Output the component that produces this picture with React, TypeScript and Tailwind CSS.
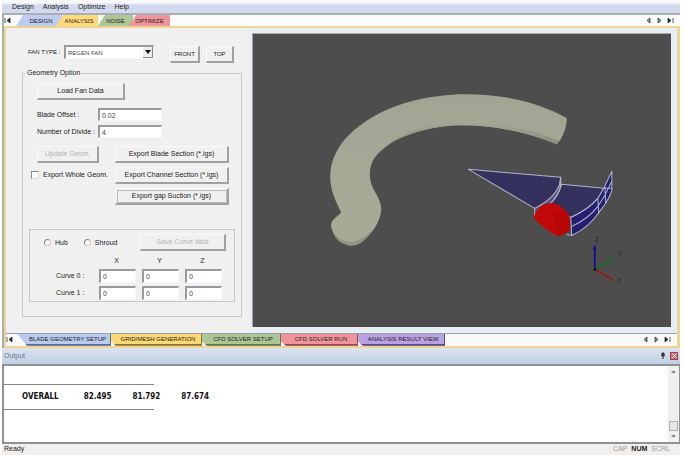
import React from "react";

const raised =
  "border-t border-l border-r-2 border-b-2 border-t-[#f8f8f8] border-l-[#f8f8f8] border-r-[#a0a0a0] border-b-[#a0a0a0] bg-[#f0f0f0] text-center whitespace-nowrap";
const sunken =
  "min-w-0 rounded-none border-t-2 border-l-2 border-r border-b border-t-[#9a9a9a] border-l-[#9a9a9a] border-r-[#f8f8f8] border-b-[#f8f8f8] bg-white px-0.5 text-[#444]";

function Push({ children, className = "", disabled = false }: { children: React.ReactNode; className?: string; disabled?: boolean }) {
  return (
    <button type="button" disabled={disabled} className={`${raised} h-[17px] disabled:text-[#b4b4b4] ${className}`}>
      {children}
    </button>
  );
}

function Arrow({ kind, label }: { kind: "first" | "prev" | "next" | "last"; label: string }) {
  const paths = {
    first: "M1 1v5M6 1L3 3.5L6 6Z",
    prev: "M5 1L2 3.5L5 6Z",
    next: "M2 1L5 3.5L2 6Z",
    last: "M6 1v5M1 1L4 3.5L1 6Z",
  };
  return (
    <button type="button" aria-label={label} className="flex h-2 w-[7px] items-center justify-center">
      <svg viewBox="0 0 7 7" className="size-[7px]">
        <path d={paths[kind]} stroke="#333" strokeWidth="0.8" fill={kind === "prev" || kind === "next" ? "#999" : "#222"} />
      </svg>
    </button>
  );
}

function Pager() {
  return (
    <div className="ml-auto flex items-center gap-1 pr-1.5">
      <Arrow kind="prev" label="Previous" />
      <Arrow kind="next" label="Next" />
      <Arrow kind="last" label="Last" />
    </div>
  );
}

const topTabs = [
  { name: "DESIGN", style: "w-[46px] bg-[#bccdf0] pl-1" },
  { name: "ANALYSIS", style: "-ml-1.5 w-[42px] bg-[#ffda7a] pl-1" },
  { name: "NOISE", style: "w-[35px] bg-[#adc696]" },
  { name: "OPTIMIZE", style: "-ml-1 w-[41px] bg-[#f0949c]" },
];

const bottomTabs = [
  { name: "BLADE GEOMETRY SETUP", style: "w-[94px] bg-[#b9cbef] border-[#5c6d96] pl-2 [clip-path:polygon(0_0,100%_0,100%_100%,10px_100%)]" },
  { name: "GRID/MESH GENERATION", style: "w-[91px] bg-[#fbd873] border-[#8a7430]" },
  { name: "CFD SOLVER SETUP", style: "w-[79px] bg-[#adc696] border-[#64784f]" },
  { name: "CFD SOLVER RUN", style: "w-[77px] bg-[#f0949c] border-[#8f4a52]" },
  { name: "ANALYSIS RESULT VIEW", style: "w-[87px] bg-[#b9a2e2] border-[#5d4a85]" },
];

function GeometryForm() {
  return (
    <form className="w-[244px] shrink-0 bg-[#f0f0f0] pt-[17px] pr-2 pb-3.5 pl-4 text-[7px] leading-2 text-[#222]">
      <div className="flex items-start">
        <label htmlFor="fan" className="mt-[3px] w-[42px] pl-1.5 text-[6px] whitespace-nowrap">FAN TYPE :</label>
        <div className="relative">
          <select id="fan" className={`${sunken} h-3.5 w-[90px] appearance-none text-[6px] leading-2`}>
            <option>REGEN FAN</option>
          </select>
          <span className="pointer-events-none absolute top-0.5 right-px flex h-[11px] w-2.5 items-center justify-center border-r border-b border-[#888] bg-[#ececec]">
            <svg viewBox="0 0 6 4" className="h-1 w-1.5"><path d="M0 0h6L3 4Z" fill="#111" /></svg>
          </span>
        </div>
        <Push className="mt-px ml-4 w-[30px] text-[6px]">FRONT</Push>
        <Push className="mt-px ml-1.5 w-7 text-[6px]">TOP</Push>
      </div>

      <fieldset className="mt-1.5 border border-[#c8c8c8] px-1.5 pb-3.5">
        <legend className="-ml-1 px-0.5">Geometry Option</legend>
        <div className="px-2 pt-1.5">
          <Push className="w-[88px]">Load Fan Data</Push>
          <div className="mt-2 grid grid-cols-[61px_64px] items-center gap-y-1">
            <label htmlFor="offset">Blade Offset :</label>
            <input id="offset" defaultValue="0.02" className={`${sunken} h-[13px]`} />
            <label htmlFor="divide" className="whitespace-nowrap">Number of Divide :</label>
            <input id="divide" defaultValue="4" className={`${sunken} h-[13px]`} />
          </div>
        </div>
        <div className="mt-2 flex justify-between pr-1.5">
          <div className="flex flex-col gap-2">
            <Push disabled className="ml-2 w-[62px]">Update Geom.</Push>
            <label className="ml-0.5 flex items-center gap-1 whitespace-nowrap">
              <input type="checkbox" className="size-2 appearance-none border border-t-[#888] border-r-[#ddd] border-b-[#ddd] border-l-[#888] bg-white" />
              Export Whole Geom.
            </label>
          </div>
          <div className="flex w-[114px] flex-col gap-1">
            <Push>Export Blade Section (*.igs)</Push>
            <Push>Export Channel Section (*.igs)</Push>
            <Push className="border-2 border-t-[#808080] border-r-[#606060] border-b-[#606060] border-l-[#808080] outline-1 -outline-offset-3 outline-[#bbb]">Export gap Suction (*.igs)</Push>
          </div>
        </div>

        <div className="mt-6 border border-[#c8c8c8] pt-1 pr-2">
          <div className="flex items-center">
            <label className="ml-3.5 flex items-center gap-1">
              <input type="radio" name="side" className="size-[7px] appearance-none rounded-full border border-t-[#888] border-r-[#ccc] border-b-[#ccc] border-l-[#888] bg-white" />
              Hub
            </label>
            <label className="ml-4 flex items-center gap-1">
              <input type="radio" name="side" className="size-[7px] appearance-none rounded-full border border-t-[#888] border-r-[#ccc] border-b-[#ccc] border-l-[#888] bg-white" />
              Shroud
            </label>
            <Push disabled className="ml-auto w-[86px]">Save Curve data</Push>
          </div>
          <table className="mt-1 mr-1 ml-auto border-collapse">
            <thead>
              <tr className="h-3">
                <td className="w-[37px]" />
                {["X", "Y", "Z"].map((axis) => (
                  <th key={axis} scope="col" className="w-[43px] p-0 pl-1 font-normal">{axis}</th>
                ))}
              </tr>
            </thead>
            <tbody>
              {["Curve 0", "Curve 1"].map((row) => (
                <tr key={row} className="h-[17px]">
                  <th scope="row" className="p-0 text-left font-normal whitespace-nowrap">{row} :</th>
                  {["X", "Y", "Z"].map((axis) => (
                    <td key={axis} className="p-0 text-right">
                      <input aria-label={`${row} ${axis}`} defaultValue="0" className={`${sunken} ml-auto block h-3.5 w-[37px]`} />
                    </td>
                  ))}
                </tr>
              ))}
            </tbody>
          </table>
        </div>
      </fieldset>
    </form>
  );
}

function Viewport() {
  return (
    <div className="flex min-w-0 flex-1 border-t border-l border-[#a8a8a8] bg-[#4d4d4d]">
      <svg viewBox="253 34 417 292" role="img" aria-label="Fan model" className="w-full font-['Liberation_Sans',sans-serif]">
        <defs>
          <linearGradient id="ringShade" x1="0" y1="0" x2="0" y2="1">
            <stop offset="0" stopColor="#a3a493" />
            <stop offset="1" stopColor="#a9aa98" />
          </linearGradient>
          <linearGradient id="edgeShade" x1="0" y1="0" x2="0" y2="1">
            <stop offset="0" stopColor="#a6a796" />
            <stop offset="1" stopColor="#858676" />
          </linearGradient>
        </defs>
        <path d="M566 118C540 103 505 94 465 94C430 94 395 103 372 117C345 133 330 153 330 177C330 190 336 202 341 212C336 217 330 220 331 226C333 238 344 245 351 245C360 245 366 238 371 232C377 225 381 215 381 208C380 197 372 190 370 180C368 165 373 156 385 147C402 133 435 125 462 125C495 125 530 133 556 144C562 138 566 127 566 118Z" fill="url(#ringShade)" />
        <path d="M381 150C400 131 434 121 462 121C495 121 530 129 558 140L556 144C530 133 495 125 462 125C435 125 402 133 385 147Z" fill="url(#edgeShade)" />
        <path d="M333 232C338 239 346 242 353 241C361 240 366 235 371 230C366 239 360 245 351 245C344 245 335 240 333 232Z" fill="#929382" />
        <g stroke="#b5b4cc" strokeWidth="1" strokeLinejoin="round">
          <path d="M561 184L603 188L597 198Q588 209 570 217L548 205Q557 197 561 184Z" fill="#34315f" />
          <path d="M468 169L560 177L559 184Q554 198 534 208Z" fill="#34315f" />
          <path d="M560 177L559 184Q553 199 534 208V215L548 205Q559 194 560 184Z" fill="#55537f" />
          <path d="M611 171L603 188L597 198Q588 209 570 217L571 235Q588 227 598 212Q608 200 611 190Z" fill="#22206f" />
          <path d="M611 181L604 195L597 206Q588 218 571 226M597 198L598 213M603 188H611M604 186L605 203" fill="none" />
          <path d="M566 234L572 235" />
        </g>
        <path d="M533 218Q534 209 543 204Q550 201 557 204Q567 210 569 217V230L558 236Q547 231 533 218Z" fill="#c20808" />
        <path d="M552 213L558 236L569 230V217L562 208Z" fill="#b90505" />
        <g strokeWidth="1.8">
          <path d="M594 269V247" stroke="#10109a" />
          <path d="M594 269L612 258" stroke="#147014" />
          <path d="M594 269L612 279" stroke="#9b1515" />
        </g>
        <path d="M592 249L594 244L596 249Z" fill="#10109a" />
        <circle cx="594" cy="269" r="1.5" fill="#111" />
        <g fill="#262626" fontSize="7">
          <text x="594" y="242">Z</text>
          <text x="617" y="255">Y</text>
          <text x="616" y="282">X</text>
        </g>
      </svg>
    </div>
  );
}

export default function App() {
  return (
    <div className="w-full bg-white pr-1 pl-0.5 font-['Liberation_Sans',Arial,sans-serif] text-[7px] leading-2 text-[#222]">
      <nav className="flex h-[15px] items-start gap-[9px] border-b-2 border-[#a9aeb7] bg-linear-to-b from-[#f8f8fa] from-20% to-[#d3daef] to-40% pt-[3px] pl-2.5">
        {["Design", "Analysis", "Optimize", "Help"].map((item) => (
          <button key={item} type="button">{item}</button>
        ))}
      </nav>

      <div className="border-l-2 border-[#a9aeb7]">
        <div className="flex h-[11px] items-stretch bg-[#fbfbfb] text-[6px]">
          <div className="flex w-3 items-center"><Arrow kind="first" label="First" /></div>
          {topTabs.map((tab) => (
            <button key={tab.name} type="button" className={`${tab.style} text-center [clip-path:polygon(7px_0,100%_0,100%_100%,0_100%)]`}>
              {tab.name}
            </button>
          ))}
          <Pager />
        </div>

        <main className="border-t-2 border-r-3 border-b-2 border-l-2 border-[#f0d494]">
          <div className="flex bg-[#e6edf5] pr-1.5">
            <GeometryForm />
            <div className="flex min-w-0 flex-1 pt-[5px] pb-1.5 pl-0.5">
              <Viewport />
            </div>
          </div>
          <div className="flex h-[13px] border-t border-[#9ca0a8] bg-[#f8f8f8] text-[6px]">
            <div className="flex w-[11px] items-center"><Arrow kind="first" label="First" /></div>
            {bottomTabs.map((tab, i) => (
              <button
                key={tab.name}
                type="button"
                className={`${tab.style} border-r border-b-2 text-center whitespace-nowrap ${i > 0 ? "pl-1 [clip-path:polygon(0_0,100%_0,100%_100%,5px_100%,0_65%)]" : ""}`}
              >
                {tab.name}
              </button>
            ))}
            <Pager />
          </div>
        </main>
      </div>

      <section>
        <header className="flex h-4 items-center bg-linear-to-b from-[#dce4ee] to-[#bfcfe2] pr-0.5 pl-0.5 text-[#6a7a90]">
          <h2>Output</h2>
          <button type="button" aria-label="Pin" className="ml-auto">
            <svg viewBox="0 0 6 7" className="h-[7px] w-1.5"><path d="M1 3.5h4M3 4v3M2 1h2v3H2Z" stroke="#333" fill="#333" /></svg>
          </button>
          <button type="button" aria-label="Close" className="ml-1 flex size-2 items-center justify-center border border-[#a04048] bg-[#cf747a]">
            <svg viewBox="0 0 5 5" className="size-[5px]"><path d="M.5 .5l4 4M4.5 .5l-4 4" stroke="#fff" /></svg>
          </button>
        </header>
        <div className="flex h-20 border-2 border-r border-[#8e9196] bg-white">
          <div className="flex-1 pt-[18px] font-['DejaVu_Sans_Condensed','DejaVu_Sans',sans-serif] text-[8px] font-bold text-[#111]">
            <div className="flex h-[26px] w-[150px] items-center gap-[25px] border-y border-[#888] pl-[18px] font-stretch-condensed">
              <span>OVERALL</span>
              <span>82.495</span>
              <span className="-ml-1">81.792</span>
              <span className="-ml-1">87.674</span>
            </div>
          </div>
          <div className="flex w-[11px] flex-col items-center bg-[#f0f0f0] py-1">
            <svg viewBox="0 0 5 3" className="h-[3px] w-[5px]"><path d="M0 3L2.500 0L5 3Z" fill="#888" /></svg>
            <div className="mt-auto mb-1 h-2.5 w-[9px] border border-[#b0b0b0] bg-[#e8e8e8]" />
            <svg viewBox="0 0 5 3" className="h-[3px] w-[5px]"><path d="M0 0L2.500 3L5 0Z" fill="#888" /></svg>
          </div>
        </div>
      </section>

      <footer className="flex h-[11px] items-center gap-1 bg-[#f0efee] pr-2.5 pl-0.5">
        <span className="mr-auto">Ready</span>
        <span className="text-[#999]">CAP</span>
        <span className="font-bold">NUM</span>
        <span className="text-[#999]">SCRL</span>
      </footer>
    </div>
  );
}
